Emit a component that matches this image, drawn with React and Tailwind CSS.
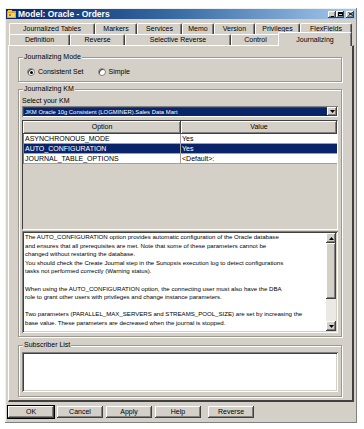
import React from 'react';

const raised = 'shadow-[inset_-1px_-1px_0_#404040,inset_1px_1px_0_#ffffff,inset_-2px_-2px_0_#808080]';
const sunken = 'shadow-[inset_1px_1px_0_#808080,inset_-1px_-1px_0_#ffffff,inset_2px_2px_0_#404040,inset_-2px_-2px_0_#d4d0c8]';

const backTabs = [
    { label: 'Journalized Tables', w: 'w-[86px]' },
    { label: 'Markers', w: 'w-[42px]' },
    { label: 'Services', w: 'w-[45px]' },
    { label: 'Memo', w: 'w-[32px]' },
    { label: 'Version', w: 'w-[41px]' },
    { label: 'Privileges', w: 'w-[45px]' },
    { label: 'FlexFields', w: 'w-[52px]' },
];

const frontTabs = [
    { label: 'Definition', w: 'w-[61px]' },
    { label: 'Reverse', w: 'w-[55px]' },
    { label: 'Selective Reverse', w: 'w-[106px]' },
    { label: 'Control', w: 'w-[49px]' },
];

const options = [
    { name: 'ASYNCHRONOUS_MODE', value: 'Yes' },
    { name: 'AUTO_CONFIGURATION', value: 'Yes', selected: true },
    { name: 'JOURNAL_TABLE_OPTIONS', value: '<Default>:' },
];

const description = [
    'The AUTO_CONFIGURATION option provides automatic configuration of the Oracle database',
    'and ensures that all prerequisites are met. Note that some of these parameters cannot be',
    'changed without restarting the database.',
    'You should check the Create Journal step in the Sunopsis execution log to detect configurations',
    'tasks not performed correctly (Warning status).',
    '',
    'When using the AUTO_CONFIGURATION option, the connecting user must also have the DBA',
    'role to grant other users with privileges and change instance parameters.',
    '',
    'Two parameters (PARALLEL_MAX_SERVERS and STREAMS_POOL_SIZE) are set by increasing the',
    'base value. These parameters are decreased when the journal is stopped.',
];

const Tab = ({ label, w }) => (
    <div className={`${w} h-full flex items-center justify-center border-t border-l border-white border-r border-r-[#404040] rounded-tl-[2px] rounded-tr-[2px] shadow-[inset_-1px_0_0_#808080] whitespace-nowrap`}>
        {label}
    </div>
);

const Group = ({ title, className, children }) => (
    <fieldset className={`min-w-0 border border-[#9c9890] shadow-[1px_1px_0_#ffffff,inset_1px_1px_0_#ffffff] px-[3px] ${className}`}>
        <legend className="ml-[1px] px-[1px] leading-[8px] bg-[#d4d0c8]">{title}</legend>
        {children}
    </fieldset>
);

const Radio = ({ label, checked }) => (
    <div className="flex items-center gap-[3px]">
        <div className="w-[8px] h-[8px] rounded-full bg-white border border-[#808080] shadow-[inset_1px_1px_0_#404040] flex items-center justify-center">
            {checked && <div className="w-[3px] h-[3px] rounded-full bg-black" />}
        </div>
        <span>{label}</span>
    </div>
);

const Arrow = ({ up }) => (
    <svg width="5" height="3" viewBox="0 0 5 3">
        <polygon points={up ? '0,3 5,3 2.5,0' : '0,0 5,0 2.5,3'} fill="#000" />
    </svg>
);

const Button = ({ label, isDefault, className = '' }) => (
    <div className={`w-[46px] h-[12px] flex items-center justify-center ${raised} ${isDefault ? 'outline outline-1 outline-black' : ''} ${className}`}>
        {label}
    </div>
);

export default function App() {
    return (
        <div className="w-[364px] h-[429px] bg-white pt-[8px] pl-[5px] font-['Liberation_Sans',Arial,sans-serif] text-[7px] text-black">
            <div className="w-[352px] h-[415px] bg-[#d4d0c8] p-[1px] flex flex-col shadow-[inset_-1px_-1px_0_#808080,inset_1px_1px_0_#f0f0f0]">
                {/* title bar */}
                <div className="h-[10px] flex items-center bg-gradient-to-r from-[#0a246a] via-[#3a6ea5] to-[#a6caf0] pl-[1px] pr-[2px]">
                    <svg width="9" height="8" viewBox="0 0 9 8" className="mr-[2px]">
                        <rect x="0" y="1" width="9" height="7" fill="#e8a317" />
                        <rect x="1" y="0" width="4" height="2" fill="#f5c542" />
                        <rect x="1" y="3" width="7" height="4" fill="#f7d36b" />
                        <rect x="2" y="4" width="2" height="2" fill="#c47a10" />
                    </svg>
                    <span className="text-white font-bold text-[8.5px] leading-[10px] whitespace-nowrap">Model: Oracle - Orders</span>
                    <div className="ml-auto flex items-center">
                        <div className={`w-[8px] h-[7px] bg-[#d4d0c8] ${raised} flex items-end justify-center pb-[1px]`}>
                            <div className="w-[3px] h-[1px] bg-black" />
                        </div>
                        <div className={`w-[8px] h-[7px] bg-[#d4d0c8] ${raised} flex items-center justify-center`}>
                            <div className="w-[5px] h-[4px] border border-black border-t-2" />
                        </div>
                        <div className={`ml-[2px] w-[8px] h-[7px] bg-[#d4d0c8] ${raised} flex items-center justify-center`}>
                            <svg width="5" height="4" viewBox="0 0 5 4">
                                <path d="M0.5 0.5 L4.5 3.5 M4.5 0.5 L0.5 3.5" stroke="#000" strokeWidth="1" />
                            </svg>
                        </div>
                    </div>
                </div>

                {/* tabs */}
                <div className="mt-[4px] px-[2px] flex flex-col">
                    <div className="h-[11px] flex pl-[1px]">
                        {backTabs.map((t) => (
                            <Tab key={t.label} label={t.label} w={t.w} />
                        ))}
                    </div>
                    <div className="h-[11px] flex items-end pl-[1px]">
                        {frontTabs.map((t) => (
                            <Tab key={t.label} label={t.label} w={t.w} />
                        ))}
                        <div className="relative z-10 -mb-[1px] -ml-[2px] w-[74px] h-[14px] bg-[#d4d0c8] flex items-start justify-center pt-[2px] border-t border-l border-white border-r border-r-[#404040] rounded-tl-[2px] rounded-tr-[2px] shadow-[inset_-1px_0_0_#808080]">
                            Journalizing
                        </div>
                    </div>

                    {/* panel */}
                    <div className="h-[357px] border-t border-l border-white border-r-2 border-b-2 border-r-[#404040] border-b-[#404040] pt-[7px] pl-[9px] pr-[10px] flex flex-col">
                        <Group title="Journalizing Mode" className="pt-[6px] pb-[4px]">
                            <div className="flex items-center gap-[14px] pl-[5px] h-[10px]">
                                <Radio label="Consistent Set" checked />
                                <Radio label="Simple" />
                            </div>
                        </Group>

                        <Group title="Journalizing KM" className="mt-[3px] pb-[3px]">
                            <div className="h-[9px] mt-[3px] leading-[9px]">Select your KM</div>
                            <div className={`h-[11px] mt-[1px] bg-white ${sunken} p-[2px] pr-[1px] flex items-center`}>
                                <div className="flex-1 min-w-0 h-[8px] bg-[#0a246a] text-white text-[5.9px] leading-[8px] pl-[1px] whitespace-nowrap overflow-hidden">
                                    JKM Oracle 10g Consistent (LOGMINER).Sales Data Mart
                                </div>
                                <div className={`w-[10px] h-[9px] bg-[#d4d0c8] ${raised} flex items-center justify-center`}>
                                    <Arrow />
                                </div>
                            </div>

                            {/* options grid */}
                            <div className="mt-[3px] h-[110px] bg-[#d4d0c8] border-t border-l border-[#404040] border-r border-b border-r-white border-b-white flex flex-col">
                                <div className="h-[13px] flex">
                                    <div className={`w-[158px] flex items-center justify-center ${raised}`}>Option</div>
                                    <div className={`flex-1 flex items-center justify-center ${raised}`}>Value</div>
                                </div>
                                <div className="border-l border-[#808080]">
                                    {options.map((o) => (
                                        <div
                                            key={o.name}
                                            className={`h-[10px] flex leading-[9px] border-b border-[#a0a0a0] ${o.selected ? 'bg-[#0a246a] text-white' : 'bg-white'}`}
                                        >
                                            <div className="w-[157px] pl-[1px] whitespace-nowrap border-r border-[#a0a0a0]">{o.name}</div>
                                            <div className="flex-1 pl-[1px] whitespace-nowrap">{o.value}</div>
                                        </div>
                                    ))}
                                </div>
                            </div>

                            {/* description */}
                            <div className={`mt-[1px] h-[102px] bg-white ${sunken} p-[2px] flex`}>
                                <div className="flex-1 min-w-0 pl-[1px] text-[6.1px] leading-[8.6px] overflow-hidden">
                                    {description.map((line, i) => (
                                        <div key={i} className="h-[8.6px] whitespace-nowrap">{line}</div>
                                    ))}
                                </div>
                                <div className="w-[10px] flex flex-col">
                                    <div className={`h-[10px] bg-[#d4d0c8] ${raised} flex items-center justify-center`}>
                                        <Arrow up />
                                    </div>
                                    <div className={`h-[56px] bg-[#d4d0c8] ${raised}`} />
                                    <div className="flex-1 bg-[#ebe9e4]" />
                                    <div className={`h-[10px] bg-[#d4d0c8] ${raised} flex items-center justify-center`}>
                                        <Arrow />
                                    </div>
                                </div>
                            </div>
                        </Group>

                        <Group title="Subscriber List" className="mt-[4px] pb-[4px]">
                            <div className={`mt-[3px] h-[40px] bg-white ${sunken}`} />
                        </Group>
                    </div>
                </div>

                {/* buttons */}
                <div className="mt-[4px] pl-[2px] flex">
                    <Button label="OK" isDefault />
                    <Button label="Cancel" className="ml-[3px]" />
                    <Button label="Apply" className="ml-[3px]" />
                    <Button label="Help" className="ml-[3px]" />
                    <Button label="Reverse" className="ml-[7px]" />
                </div>
            </div>
        </div>
    );
}
